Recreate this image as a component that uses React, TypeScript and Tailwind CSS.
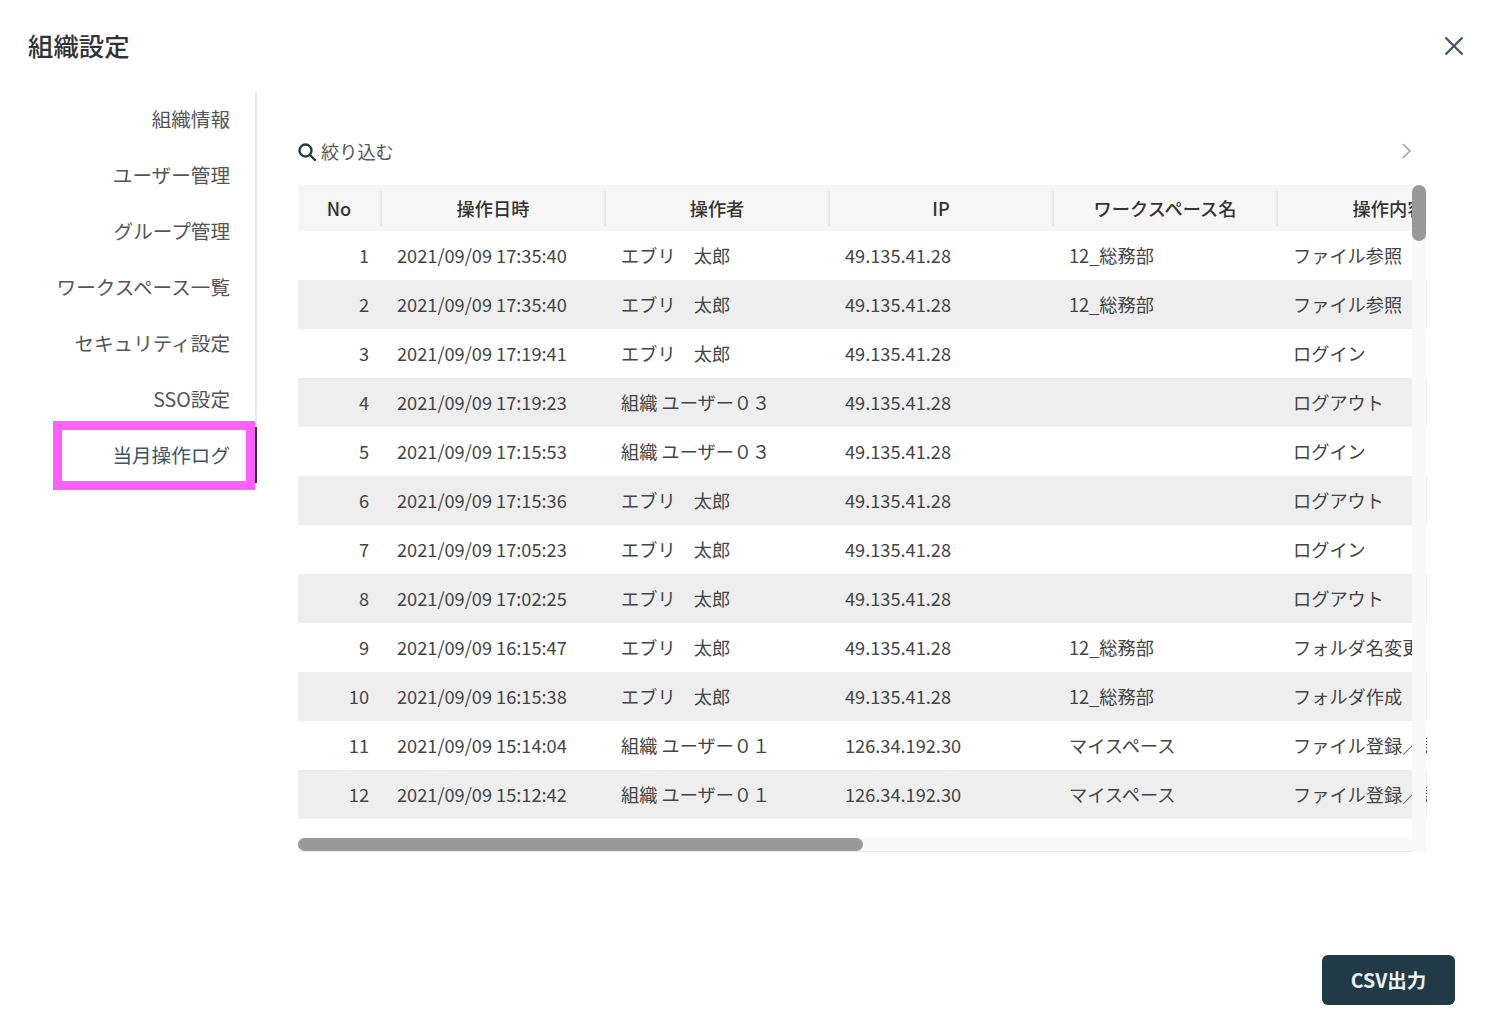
const menu = [
  "組織情報",
  "ユーザー管理",
  "グループ管理",
  "ワークスペース一覧",
  "セキュリティ設定",
  "SSO設定",
];

const columns = ["No", "操作日時", "操作者", "IP", "ワークスペース名", "操作内容"];

const taro = "エブリ　太郎";
const user1 = "組織 ユーザー０１";
const user3 = "組織 ユーザー０３";
const ipA = "49.135.41.28";
const ipB = "126.34.192.30";

const rows = [
  ["2021/09/09 17:35:40", taro, ipA, "12_総務部", "ファイル参照"],
  ["2021/09/09 17:35:40", taro, ipA, "12_総務部", "ファイル参照"],
  ["2021/09/09 17:19:41", taro, ipA, "", "ログイン"],
  ["2021/09/09 17:19:23", user3, ipA, "", "ログアウト"],
  ["2021/09/09 17:15:53", user3, ipA, "", "ログイン"],
  ["2021/09/09 17:15:36", taro, ipA, "", "ログアウト"],
  ["2021/09/09 17:05:23", taro, ipA, "", "ログイン"],
  ["2021/09/09 17:02:25", taro, ipA, "", "ログアウト"],
  ["2021/09/09 16:15:47", taro, ipA, "12_総務部", "フォルダ名変更"],
  ["2021/09/09 16:15:38", taro, ipA, "12_総務部", "フォルダ作成"],
  ["2021/09/09 15:14:04", user1, ipB, "マイスペース", "ファイル登録／更新"],
  ["2021/09/09 15:12:42", user1, ipB, "マイスペース", "ファイル登録／更新"],
];

function Sidebar() {
  return (
    <nav className="flex w-[257px] shrink-0 flex-col self-start">
      {menu.map((label) => (
        <a
          key={label}
          className="flex h-14 items-center justify-end border-r-2 border-[#e2e8f3] pr-[25px] text-[19.6px] text-[#555555]"
        >
          {label}
        </a>
      ))}
      <a className="relative flex h-14 items-center justify-end border-r-2 border-[#203a47] pr-[25px] text-[19.6px] text-[#3d5566]">
        当月操作ログ
        <span className="absolute top-[-6px] bottom-[-7px] left-[53px] right-0 border-[9px] border-[#ff5fff]" />
      </a>
    </nav>
  );
}

function LogTable() {
  return (
    <div className="relative h-[667px] w-[1129px] overflow-hidden">
      <table className="w-[2228px] table-fixed border-collapse text-[18.2px]">
        <thead>
          <tr className="h-[46px] bg-[#f6f6f6]">
            {columns.map((name, i) => (
              <th
                key={name}
                className={`relative pt-[2px] pr-[2px] font-medium text-[#333333] ${i === 0 ? "w-[84px]" : "w-[224px]"}`}
              >
                {name}
                {i < columns.length - 1 && (
                  <span className="absolute top-[6px] right-0 bottom-[5px] w-[2px] bg-[#dfe8f1]" />
                )}
              </th>
            ))}
            <th />
          </tr>
        </thead>
        <tbody>
          {rows.map((row, i) => (
            <tr key={i} className={`h-[49px] ${i % 2 === 1 ? "bg-[#eeeeee]" : "bg-white"}`}>
              <td className="pr-[13px] text-right text-[#444444]">{i + 1}</td>
              {row.map((cell, j) => (
                <td key={j} className="overflow-hidden pl-[15px] whitespace-nowrap text-[#444444]">
                  {cell}
                </td>
              ))}
              <td />
            </tr>
          ))}
        </tbody>
      </table>

      {/* scrollbars sit over the table */}
      <div className="absolute right-px bottom-0 left-0 h-[14px] border-b border-[#e3e9f3] bg-[#f9f9f9]">
        <div className="h-[13px] w-[565px] rounded-full bg-[#999999]" />
      </div>
      <div className="absolute top-0 right-px bottom-0 w-[14px] bg-[#f9f9f9]">
        <div className="h-[56px] w-[14px] rounded-full bg-[#999999]" />
      </div>
    </div>
  );
}

export default function App() {
  return (
    <div className="flex h-[1022px] w-[1500px] flex-col bg-white font-['Noto_Sans_CJK_JP','Noto_Sans',sans-serif]">
      <header className="flex h-[91px] shrink-0 items-center justify-between pr-[36px] pl-[28px]">
        <h1 className="text-[25.4px] font-medium text-[#333333]">組織設定</h1>
        <button type="button" aria-label="閉じる">
          <svg width="20" height="20" viewBox="0 0 20 20" fill="none" stroke="#3f5a6b" strokeWidth="2.4">
            <path d="M1.5 1.5 18.5 18.5M18.5 1.5 1.5 18.5" />
          </svg>
        </button>
      </header>

      <div className="flex min-h-0 flex-1">
        <Sidebar />
        <main className="min-w-0 flex-1 pt-[46px] pl-[41px]">
          <div className="mb-[18px] flex h-[30px] w-[1117px] items-center justify-between">
            <div className="flex items-center gap-[5px] text-[18.2px] text-[#555555]">
              <svg width="18" height="18" viewBox="0 0 18 18" fill="none" stroke="#203a47" strokeWidth="2.4">
                <circle cx="7.5" cy="7.5" r="6" />
                <path d="M12 12 17 17" strokeLinecap="round" />
              </svg>
              絞り込む
            </div>
            <svg width="9" height="16" viewBox="0 0 9 16" fill="none" stroke="#999999" strokeWidth="1.4" className="mr-[4px] mb-[2px]">
              <path d="M1 1 8 8 1 15" />
            </svg>
          </div>
          <LogTable />
        </main>
      </div>

      <footer className="flex shrink-0 justify-end pr-[45px] pb-[17px]">
        <button
          type="button"
          className="h-[50px] w-[133px] rounded-[6px] bg-[#203a47] text-[19.5px] font-bold text-[#eef1f3]"
        >
          CSV出力
        </button>
      </footer>
    </div>
  );
}
